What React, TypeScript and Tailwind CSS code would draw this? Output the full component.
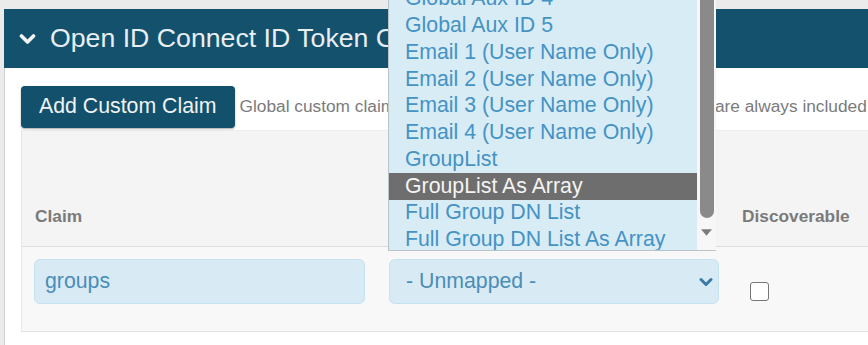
import React from "react"

const options = [
  "Global Aux ID 4",
  "Global Aux ID 5",
  "Email 1 (User Name Only)",
  "Email 2 (User Name Only)",
  "Email 3 (User Name Only)",
  "Email 4 (User Name Only)",
  "GroupList",
  "GroupList As Array",
  "Full Group DN List",
  "Full Group DN List As Array",
]

function Chevron({ className }: { className?: string }) {
  return (
    <svg viewBox="0 0 14 10" className={className} fill="none" stroke="currentColor" strokeWidth="3" strokeLinecap="round" strokeLinejoin="round">
      <path d="M2 2.5 L7 7.5 L12 2.5" />
    </svg>
  )
}

export default function App() {
  return (
    <div className="relative w-[868px] h-[345px] overflow-hidden bg-[#ebebeb] pt-[9px] pl-[4px]" style={{ fontFamily: '"Liberation Sans", Arial, sans-serif' }}>
      {/* panel */}
      <div className="w-[1100px] h-full flex flex-col">
        {/* header */}
        <div className="h-[59px] bg-[#13516d] flex items-center pl-[15px] gap-[14px] shrink-0">
          <Chevron className="w-[17px] h-[12px] text-[#f2f4f5]" />
          <span className="text-[26.7px] text-[#e8eef2] leading-none">Open ID Connect ID Token Claims</span>
        </div>

        {/* body */}
        <div className="flex-1 bg-white border-l border-[#d2d2d2] pl-[16px] pt-[18px]">
          <div className="flex items-center gap-[5px]">
            <button className="h-[42px] px-[18px] rounded-[4px] bg-[#13506b] text-[#f1f3f4] text-[21.3px] shadow-[0_1px_2px_rgba(0,0,0,0.35)]">
              Add Custom Claim
            </button>
            <span className="text-[17.3px] text-[#7b7b7b] whitespace-nowrap">
              Global custom claims with a mapped attribute value in this list are always included in the ID token.
            </span>
          </div>

          {/* table */}
          <div className="mt-[2px] border-l border-[#e6e6e6]">
            <div className="h-[117px] bg-[#f4f4f4] border-t border-[#ececec] border-b border-b-[#dedede] flex items-end pb-[16px] text-[17.3px] font-bold text-[#7a7a7a]">
              <div className="w-[355px] pl-[13px]">Claim</div>
              <div className="w-[354px] pl-[12px]">Attribute Mapping</div>
              <div className="pl-[11px]">Discoverable</div>
            </div>
            <div className="h-[85px] bg-[#f8f8f8] border-b border-[#e2e2e2] flex items-start pt-[12px]">
              <div className="w-[355px] pl-[12px]">
                <div className="h-[45px] w-[331px] rounded-[6px] bg-[#d8ebf5] border border-[#c4e2ef] flex items-center pl-[10px] text-[21.3px] text-[#4b8db8]">
                  groups
                </div>
              </div>
              <div className="w-[354px] pl-[12px]">
                <div className="h-[45px] w-[330px] rounded-[6px] bg-[#d8ebf5] border border-[#c4e2ef] flex items-center justify-between pl-[16px] pr-[5px] text-[21.3px] text-[#4b8db8]">
                  <span>- Unmapped -</span>
                  <Chevron className="w-[14px] h-[10px] text-[#3a7aa6]" />
                </div>
              </div>
              <div className="pl-[19px] pt-[23px]">
                <div className="w-[19px] h-[19px] rounded-[3px] border border-[#767676] bg-white" />
              </div>
            </div>
          </div>
        </div>
      </div>

      {/* open dropdown list */}
      <div className="absolute left-[388px] top-0 w-[328px] h-[251px] overflow-hidden bg-[#d8ecf6] border-l border-b border-[#b9c3c8] flex">
        <div className="flex-1 -mt-[14px]">
          {options.map((o) => (
            <div
              key={o}
              className={`h-[26.75px] flex items-center pl-[16px] text-[21.3px] whitespace-nowrap ${
                o === "GroupList As Array" ? "bg-[#6e6e6e] text-[#f4f4f4]" : "text-[#4592c4]"
              }`}
            >
              {o}
            </div>
          ))}
        </div>
        <div className="w-[19px] bg-[#f7f7f7] flex flex-col items-center">
          <div className="w-[14px] h-[218px] rounded-b-[7px] bg-[#8a8a8a]" />
          <svg viewBox="0 0 10 6" className="w-[11px] h-[7px] mt-[11px]" fill="#7d7d7d">
            <path d="M0 0 L10 0 L5 6 Z" />
          </svg>
        </div>
      </div>
    </div>
  )
}
